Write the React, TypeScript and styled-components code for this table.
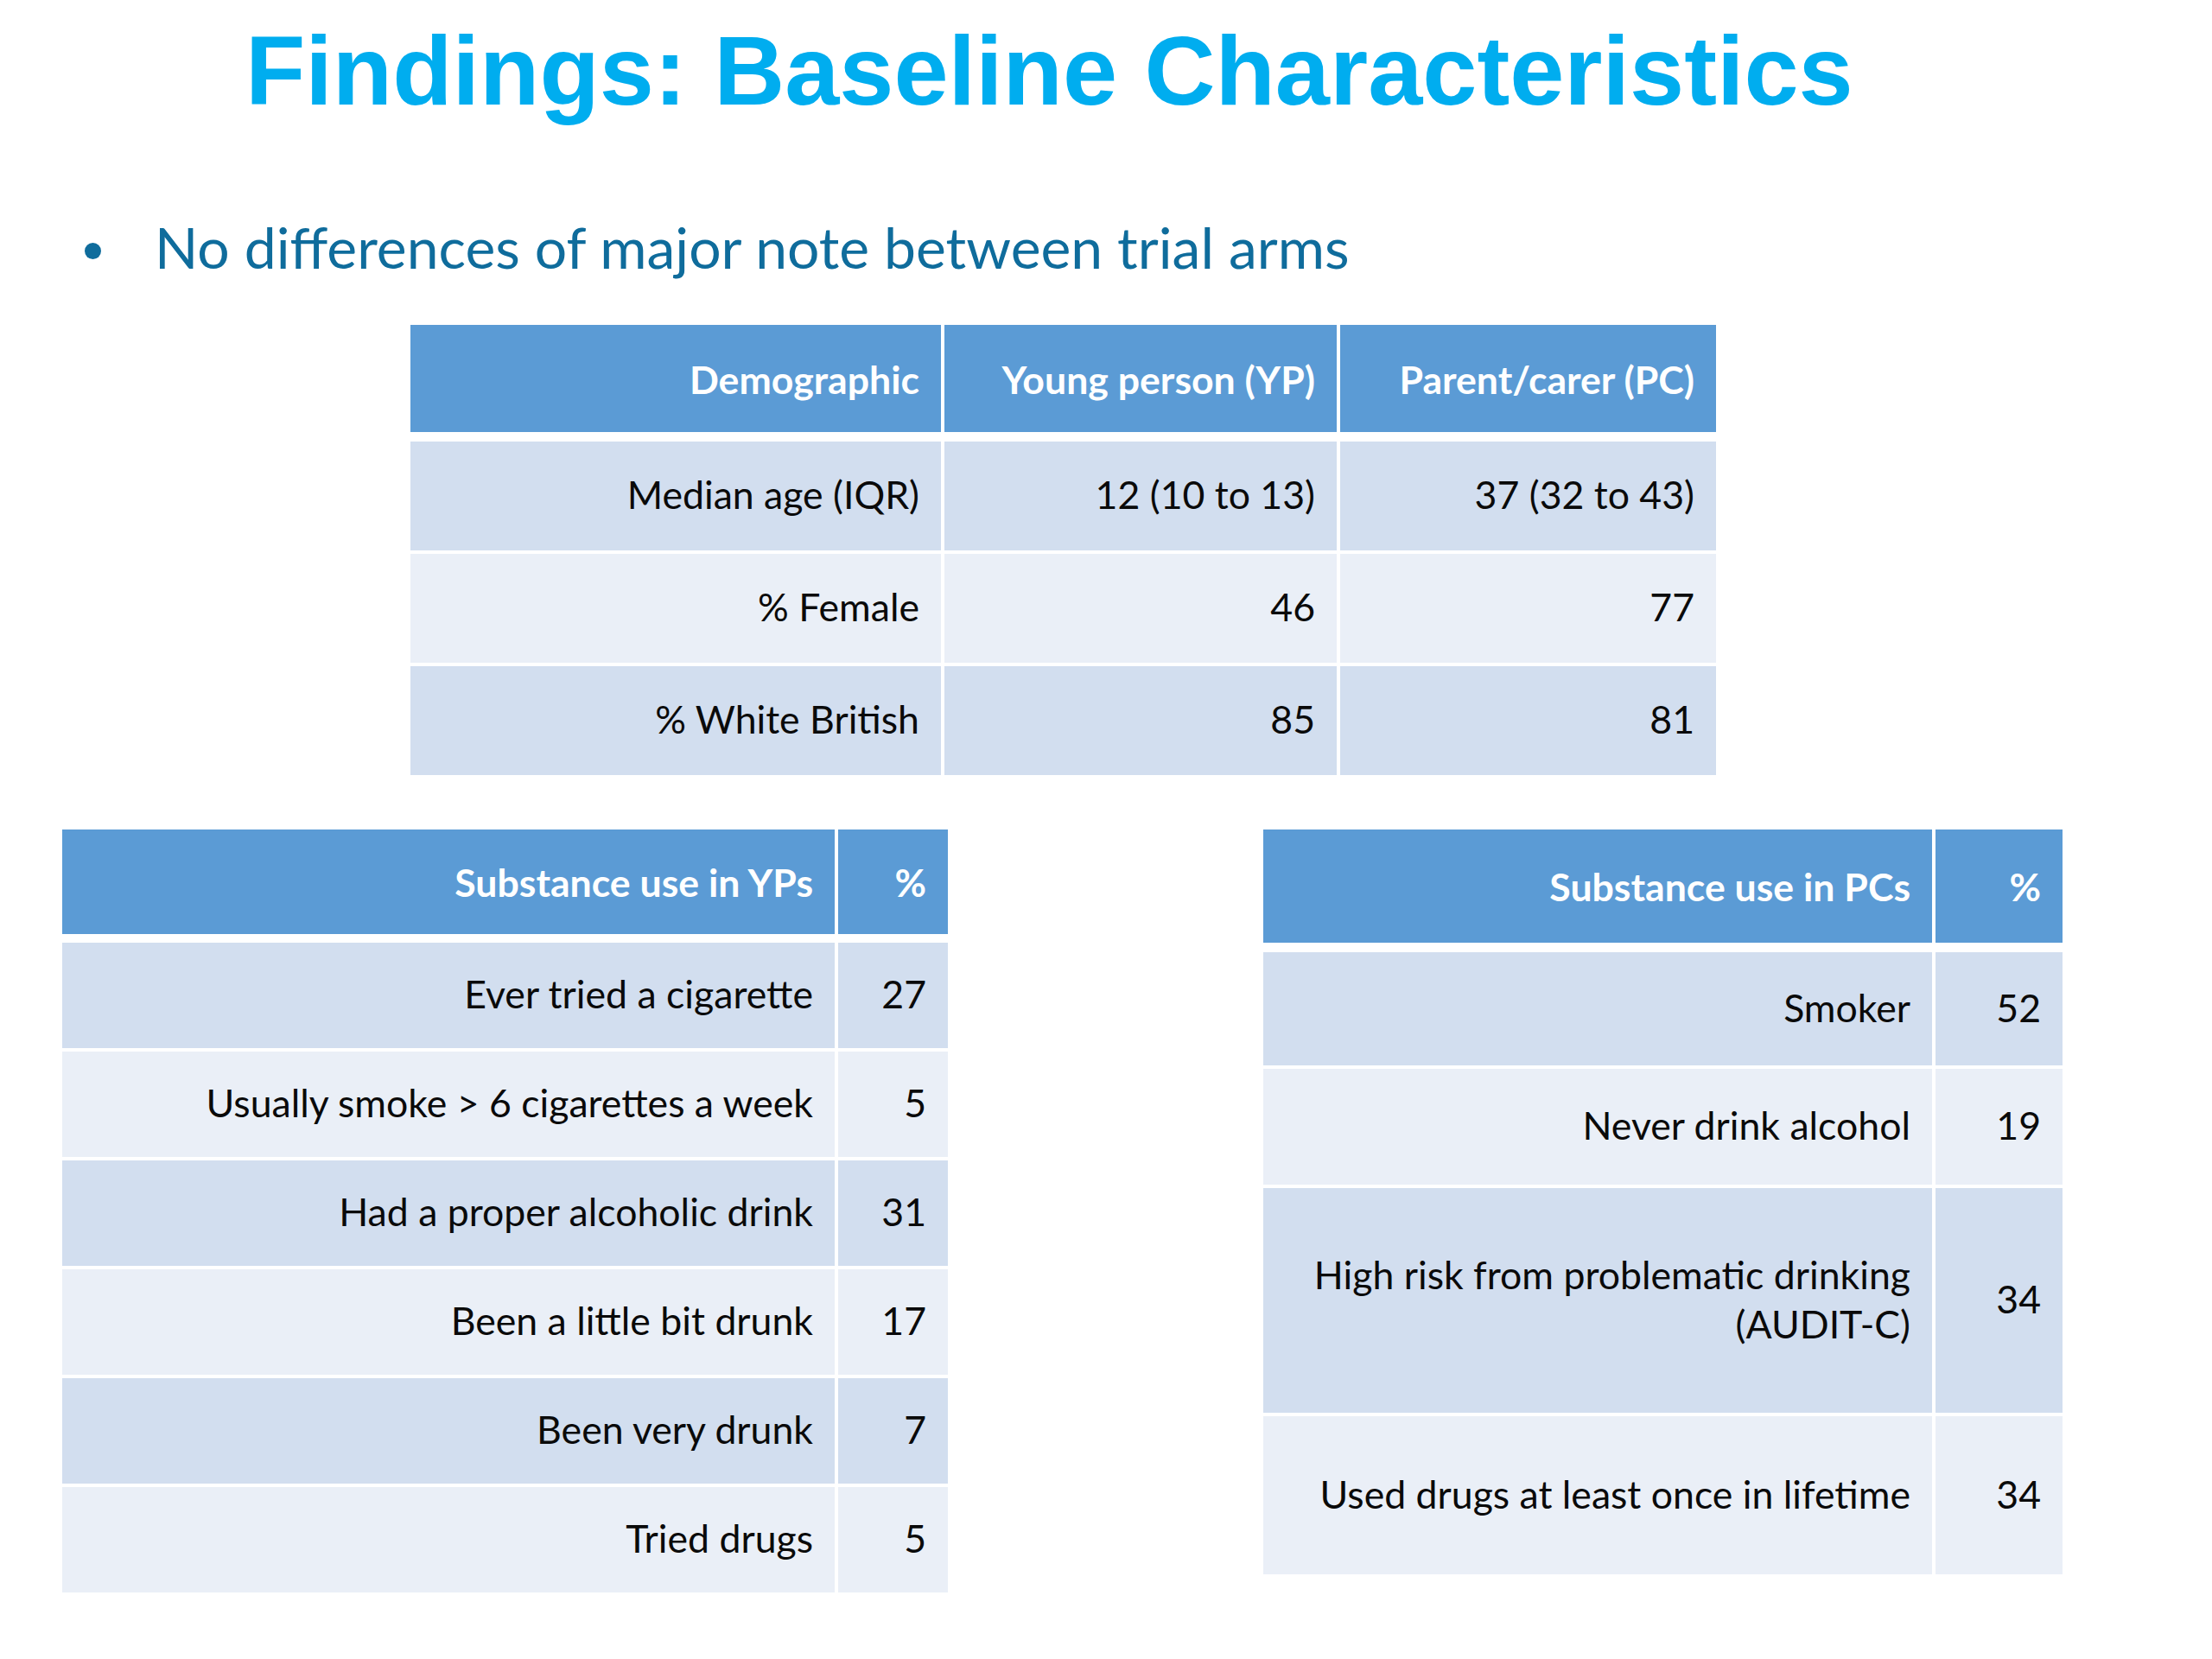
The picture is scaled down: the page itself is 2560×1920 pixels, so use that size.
import React from 'react';
import styled, { createGlobalStyle } from 'styled-components';

const GlobalStyle = createGlobalStyle`
  html, body {
    margin: 0;
    padding: 0;
    background: #ffffff;
  }
  body {
    font-family: Lato, "Open Sans", sans-serif;
  }
`;

const Slide = styled.main`
  width: 2560px;
  height: 1920px;
  box-sizing: border-box;
  padding-top: 25px;
  display: flex;
  flex-direction: column;
  background: #ffffff;
  overflow: hidden;
`;

const Title = styled.h1`
  margin: 0 0 0 284px;
  font-family: "Liberation Sans", Arial, sans-serif;
  font-weight: 700;
  font-size: 113.5px;
  line-height: 113px;
  color: #00adef;
  white-space: nowrap;
`;

const BulletList = styled.ul`
  list-style: none;
  margin: 116px 0 0 0;
  padding: 0 0 0 98px;
`;

const BulletItem = styled.li`
  display: flex;
  align-items: flex-start;
  font-family: Lato, "Open Sans", sans-serif;
  font-size: 66px;
  line-height: 64px;
  color: #0f6c9c;
  white-space: nowrap;

  &::before {
    content: "";
    flex: none;
    width: 19px;
    height: 19px;
    margin-top: 27px;
    margin-right: 62px;
    border-radius: 50%;
    background: currentColor;
  }
`;

const DemoWrap = styled.section`
  margin-top: 58px;
  padding-left: 475px;
`;

const BottomRow = styled.section`
  display: flex;
  align-items: flex-start;
  gap: 365px;
  margin-top: 63px;
  padding-left: 72px;
`;

const Grid = styled.div<{ $cols: string; $rows: string }>`
  display: grid;
  grid-template-columns: ${(p) => p.$cols};
  grid-template-rows: ${(p) => p.$rows};
  column-gap: 4px;
  row-gap: 4px;
  font-family: Lato, "Open Sans", sans-serif;
  font-size: 44.6px;
  line-height: 57px;
`;

const HeadCell = styled.div<{ $gapBelow: number }>`
  display: flex;
  align-items: center;
  justify-content: flex-end;
  box-sizing: border-box;
  padding: 0 25px;
  margin-bottom: ${(p) => p.$gapBelow}px;
  background: #5b9bd5;
  color: #ffffff;
  font-weight: 700;
  text-align: right;
  white-space: nowrap;
`;

const Cell = styled.div<{ $band: boolean }>`
  display: flex;
  align-items: center;
  justify-content: flex-end;
  box-sizing: border-box;
  padding: 0 25px 5px;
  background: ${(p) => (p.$band ? '#d2deef' : '#eaeff7')};
  color: #0a0a0a;
  font-weight: 400;
  text-align: right;
  white-space: nowrap;
`;

type Row = { cells: React.ReactNode[] };

const demoHead = ['Demographic', 'Young person (YP)', 'Parent/carer (PC)'];
const demoRows: Row[] = [
  { cells: ['Median age (IQR)', '12 (10 to 13)', '37 (32 to 43)'] },
  { cells: ['% Female', '46', '77'] },
  { cells: ['% White British', '85', '81'] },
];

const ypHead = ['Substance use in YPs', '%'];
const ypRows: Row[] = [
  { cells: ['Ever tried a cigarette', '27'] },
  { cells: ['Usually smoke > 6 cigarettes a week', '5'] },
  { cells: ['Had a proper alcoholic drink', '31'] },
  { cells: ['Been a little bit drunk', '17'] },
  { cells: ['Been very drunk', '7'] },
  { cells: ['Tried drugs', '5'] },
];

const pcHead = ['Substance use in PCs', '%'];
const pcRows: Row[] = [
  { cells: ['Smoker', '52'] },
  { cells: ['Never drink alcohol', '19'] },
  {
    cells: [
      <span key="a">
        High risk from problematic drinking
        <br />
        (AUDIT-C)
      </span>,
      '34',
    ],
  },
  { cells: ['Used drugs at least once in lifetime', '34'] },
];

type TableProps = {
  cols: string;
  rows: string;
  head: string[];
  body: Row[];
  headGap: number;
};

function DataTable({ cols, rows, head, body, headGap }: TableProps) {
  return (
    <Grid $cols={cols} $rows={rows} role="table">
      {head.map((h) => (
        <HeadCell key={h} $gapBelow={headGap} role="columnheader">
          {h}
        </HeadCell>
      ))}
      {body.map((r, i) =>
        r.cells.map((c, j) => (
          <Cell key={`${i}-${j}`} $band={i % 2 === 0} role="cell">
            {c}
          </Cell>
        ))
      )}
    </Grid>
  );
}

export default function App() {
  return (
    <>
      <GlobalStyle />
      <Slide>
        <Title>Findings: Baseline Characteristics</Title>
        <BulletList>
          <BulletItem>No differences of major note between trial arms</BulletItem>
        </BulletList>
        <DemoWrap>
          <DataTable
            cols="614px 454px 435px"
            rows="131px 126px 126px 126px"
            head={demoHead}
            body={demoRows}
            headGap={7}
          />
        </DemoWrap>
        <BottomRow>
          <DataTable
            cols="894px 127px"
            rows="127px 122px 122px 122px 122px 122px 122px"
            head={ypHead}
            body={ypRows}
            headGap={6}
          />
          <DataTable
            cols="774px 147px"
            rows="138px 131px 134px 260px 183px"
            head={pcHead}
            body={pcRows}
            headGap={7}
          />
        </BottomRow>
      </Slide>
    </>
  );
}
